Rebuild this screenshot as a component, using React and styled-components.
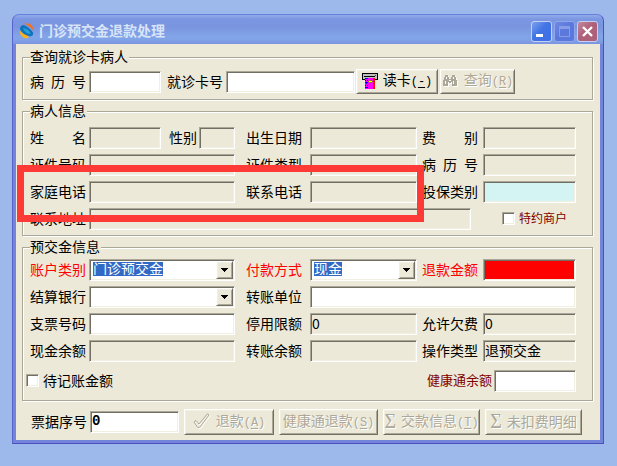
import { useId } from "react";
import styled, { createGlobalStyle, css } from "styled-components";

const GlobalStyle = createGlobalStyle`
  *,
  *::before,
  *::after {
    box-sizing: border-box;
  }

  body {
    margin: 0;
    background: #9db9eb;
    color: #000;
    font-family: "Noto Sans CJK SC", sans-serif;
    font-size: 14px;
    line-height: 14px;
  }

  button,
  input,
  select {
    margin: 0;
    border-radius: 0;
    font: inherit;
    color: inherit;
  }
`;

const sunken = css`
  border: 1px solid;
  border-color: #aca899 #fff #fff #aca899;
  box-shadow: inset 1px 1px 0 #716f64, inset -1px -1px 0 #f1efe2;
`;

const raised = css`
  border: 1px solid;
  border-color: #fff #716f64 #716f64 #fff;
  box-shadow: inset 1px 1px 0 #f1efe2, inset -1px -1px 0 #aca899;
`;

const Desktop = styled.div`
  padding: 14px 13px 22px 12px;
`;

const Window = styled.main`
  border: 1px solid #5a63cb;
  border-top-color: #6681dd;
  border-right-color: #4f4fbd;
  border-bottom-color: #4f4fbd;
  border-radius: 7px 7px 0 0;
  background: #7385da;
  padding: 0 3px 3px;
  overflow: hidden;
`;

const TitleBar = styled.header`
  display: flex;
  align-items: center;
  gap: 4px;
  height: 29px;
  margin: 0 -3px;
  padding: 3px 5px 0 6px;
  background: linear-gradient(
    #91abeb 0,
    #7c97e1 4px,
    #7a95df 12px,
    #82a5e9 22px,
    #80a2e7 25px,
    #7b93df 29px
  );
`;

const Title = styled.h1`
  flex: 1;
  margin: 0;
  padding-bottom: 2px;
  font-size: 14px;
  line-height: 14px;
  font-weight: 700;
  color: #d8e4f8;
`;

const WindowButtons = styled.div`
  display: flex;
  gap: 2px;
`;

const backgrounds = {
  min: "linear-gradient(135deg, #7da0f0, #4374e4 45%, #3d6fe6)",
  max: "linear-gradient(135deg, #6f8ae3, #5b78dc 45%, #5977dd)",
  close: "linear-gradient(135deg, #c08a9d, #b0607a 45%, #ab6278)",
};

const WindowButton = styled.button`
  display: grid;
  place-items: center;
  width: 21px;
  height: 21px;
  padding: 0;
  border: 1px solid ${(props) => (props.$kind === "max" ? "#8fa6ea" : "#c3d0f4")};
  border-radius: 3px;
  background: ${(props) => backgrounds[props.$kind]};
`;

const Content = styled.form`
  display: flex;
  flex-direction: column;
  gap: 4px;
  padding: 6px 7px 5px 6px;
  background: #ece9d8;
`;

const Group = styled.fieldset`
  min-width: 0;
  margin: 0;
  padding: ${(props) => props.$padding};
  border: 1px solid #aca899;
  box-shadow: 1px 1px 0 #fff, inset 1px 1px 0 #fff;
`;

const Legend = styled.legend`
  height: 14px;
  padding: 0 1px 0 0;
  background: #ece9d8;
  line-height: 12px;
`;

const FormGrid = styled.div`
  position: relative;
  display: grid;
  grid-template-columns:
    59px minmax(0, 146fr) 75px minmax(0, 107fr)
    66px minmax(0, 93fr);
  grid-auto-rows: 22px;
  row-gap: 5px;
  align-items: center;

  & + & {
    margin-top: 5px;
  }
`;

const labelColors = {
  required: "#ff0000",
  note: "#800000",
};

const Label = styled.label`
  padding-bottom: 2px;
  color: ${(props) => labelColors[props.$tone] || "#000"};
  font-size: ${(props) => (props.$tone === "note" ? "13px" : "14px")};
  white-space: nowrap;

  ${FormGrid} > &:nth-of-type(3n + 2) {
    padding-left: 11px;
  }

  ${FormGrid} > &:nth-of-type(3n) {
    padding-left: 5px;
  }
`;

const fills = {
  readonly: "#ece9d8",
  cyan: "#d3f4f2",
  red: "#ff0000",
};

const Input = styled.input`
  ${sunken}
  width: ${(props) => props.$width || "100%"};
  min-width: 0;
  height: 22px;
  padding: 0 1px 3px;
  background: ${(props) => fills[props.$fill] || "#fff"};
  font-weight: ${(props) => (props.$bold ? 700 : 400)};
  font-family: ${(props) =>
    props.$bold
      ? `"Liberation Mono", monospace`
      : `"Noto Sans CJK SC", sans-serif`};
  grid-column: ${(props) => props.$column || "auto"};
`;

const NameCell = styled.div`
  display: grid;
  grid-template-columns: minmax(0, 72fr) 38px minmax(0, 36fr);
  align-items: center;

  ${Label} {
    padding-left: 8px;
  }
`;

const AddressCell = styled.div`
  grid-column: 2 / 6;
  padding-right: 12px;
`;

const ComboBox = styled.div`
  ${sunken}
  position: relative;
  height: 22px;
  padding: 2px 2px 2px 3px;
  background: #fff;
`;

const Select = styled.select`
  appearance: none;
  display: block;
  width: 100%;
  height: 14px;
  padding: 0 0 1px;
  border: 0;
  outline: 0;
  color: #fff;
  line-height: 13px;
  background: linear-gradient(#316ac5, #316ac5) no-repeat;
  background-size: ${(props) => props.$chars * 14}px 14px;
`;

const DropArrow = styled.span`
  ${raised}
  position: absolute;
  top: 1px;
  right: 1px;
  display: grid;
  place-items: center;
  width: 17px;
  height: 18px;
  background: #ece9d8;
  pointer-events: none;
`;

const Row = styled.div`
  display: flex;
  align-items: center;
`;

const SearchRow = styled(Row)`
  height: 25px;
  gap: 3px;

  ${Label} + ${Input} + ${Label} {
    margin-left: 3px;
  }
`;

const SearchButtons = styled.div`
  display: flex;
  gap: 2px;
  margin-left: -2px;
`;

const BalanceRow = styled(Row)`
  justify-content: space-between;
  margin: 8px 0 0 -4px;
`;

const Balance = styled(Row)`
  gap: 2px;
`;

const CheckLabel = styled(Label)`
  display: flex;
  align-items: center;
  gap: 4px;
  font-size: ${(props) => (props.$tone === "note" ? "12px" : "14px")};

  ${FormGrid} > && {
    padding-left: 19px;
  }
`;

const Checkbox = styled.input`
  ${sunken}
  appearance: none;
  flex: none;
  width: 13px;
  height: 13px;
  background: #fff;
`;

const ActionRow = styled(Row)`
  gap: 5px;
  margin-top: 4px;
  padding: 0 11px 0 9px;

  ${Label} {
    margin-right: -2px;
  }
`;

const Button = styled.button`
  ${raised}
  display: flex;
  flex: 0 1 ${(props) => props.$width};
  width: ${(props) => props.$width};
  align-items: center;
  justify-content: center;
  gap: 5px;
  height: ${(props) => (props.$tall ? "26px" : "25px")};
  padding: 0 2px 2px;
  background: #ece9d8;
  white-space: nowrap;
  overflow: hidden;

  &:disabled {
    color: #aca899;
    text-shadow: 1px 1px 0 #fff;
  }

  svg {
    flex: none;
  }
`;

const Hotkey = styled.span`
  font-family: "Liberation Mono", monospace;
  font-size: 12px;

  u {
    text-decoration-thickness: 1px;
    text-underline-offset: 2px;
  }
`;

const Sigma = styled.span`
  font-family: "Liberation Serif", serif;
  font-size: 20px;
`;

// Covers the phone row, reaching into the rows above and below
const Highlight = styled.div`
  position: absolute;
  grid-column: 1 / 5;
  grid-row: 3 / 4;
  inset: -16px -7px -19px -13px;
  border: 7px solid #fd3a36;
  pointer-events: none;
`;

function LogoIcon() {
  return (
    <svg width="16" height="16" viewBox="0 0 16 16" aria-hidden="true">
      <path d="M5 0.500 H10 Q14 2 15 8 L11.500 4.500 Q9 2 5 0.500Z" fill="#f4701c" />
      <path d="M0.500 7 Q3 11 9 12.500 L9.500 15 Q5 16 2 12.500 Q0.500 10 0.500 7Z" fill="#fbb01c" />
      <path d="M1.500 3.500 L4 2 Q9 3 14 9.500 V12 L11.500 13.500 Q4 12 1 6.500Z" fill="#1272b8" />
      <path d="M4 5 Q9 5 12 11 Q6 11 4 5Z" fill="#24a0dc" />
    </svg>
  );
}

function CardIcon() {
  return (
    <svg
      width="16"
      height="16"
      viewBox="0 0 16 16"
      shapeRendering="crispEdges"
      aria-hidden="true"
    >
      <path d="M0 0h16v7h-3V6H3v1H0z" fill="#000" />
      <path d="M1 1h14v5H1z" fill="#c0c0c0" />
      <path d="M2 3h11v1H2z" fill="#000" />
      <path d="M13 2h1v1h-1z" fill="#f00" />
      <path d="M3 5h10v11H3z" fill="#f0f" />
      <path d="M11 5h2v11h-2z" fill="#f00" />
      <path
        d="M3 5h3v1H3zM3 7h1v1H3zM5 7h1v1H5zM3 9h3v1H3zM4 10h1v1H4zM3 12h1v1H3zM5 12h1v1H5zM3 14h3v1H3z"
        fill="#00f"
      />
      <path d="M7 7h3v1H7zM6 8h1v1H6zM10 8h1v1h-1zM7 9h3v1H7z" fill="#808000" />
      <path d="M7 8h3v1H7z" fill="#ff0" />
    </svg>
  );
}

function BinocularsIcon() {
  const shape =
    "M3 1h3v2h1v2h2V3h1V1h3v2h1v3h1v6h-5V8H9v1H7V8H6v4H1V6h1V3h1z";

  return (
    <svg
      width="17"
      height="14"
      viewBox="0 0 17 14"
      shapeRendering="crispEdges"
      aria-hidden="true"
    >
      <path d={shape} fill="#fff" transform="translate(1 1)" />
      <path d={shape} fill="#aca899" />
      <path
        d="M4 3h1v2H4zM11 3h1v2h-1zM3 7h1v3H3zM11 7h1v3h-1zM7 6h2v1H7z"
        fill="#fff"
      />
    </svg>
  );
}

function CheckIcon() {
  const shape = "M1 9 L3 7.5 L6 11 L14.5 0.8 L16 2 L6.5 14.5 L4.8 14.5 Z";

  return (
    <svg width="18" height="17" viewBox="0 0 18 17" fill="none" aria-hidden="true">
      <path d={shape} stroke="#fff" transform="translate(1 1)" />
      <path d={shape} stroke="#aca899" />
    </svg>
  );
}

function Field({ label, tone, ...inputProps }) {
  const id = useId();

  return (
    <>
      <Label htmlFor={id} $tone={tone}>
        {label}
      </Label>
      <Input id={id} type="text" {...inputProps} />
    </>
  );
}

function ReadOnlyField(props) {
  return <Field readOnly $fill="readonly" {...props} />;
}

function ComboField({ label, tone, value = "" }) {
  const id = useId();

  return (
    <>
      <Label htmlFor={id} $tone={tone}>
        {label}
      </Label>
      <ComboBox>
        <Select id={id} $chars={value.length}>
          <option>{value}</option>
        </Select>
        <DropArrow>
          <svg width="7" height="4" shapeRendering="crispEdges">
            <path d="M0 0h7v1H0zM1 1h5v1H1zM2 2h3v1H2zM3 3h1v1H3z" />
          </svg>
        </DropArrow>
      </ComboBox>
    </>
  );
}

function AddressField() {
  const id = useId();

  return (
    <>
      <Label htmlFor={id}>联系地址</Label>
      <AddressCell>
        <Input id={id} type="text" readOnly $fill="readonly" />
      </AddressCell>
    </>
  );
}

function NameField() {
  const id = useId();

  return (
    <>
      <Label htmlFor={id}>姓　　名</Label>
      <NameCell>
        <Input id={id} type="text" readOnly $fill="readonly" />
        <ReadOnlyField label="性别" />
      </NameCell>
    </>
  );
}

function Key({ children }) {
  return (
    <Hotkey>
      (<u>{children}</u>)
    </Hotkey>
  );
}

function App() {
  return (
    <>
      <GlobalStyle />
      <Desktop>
        <Window>
          <TitleBar>
            <LogoIcon />
            <Title>门诊预交金退款处理</Title>
            <WindowButtons>
              <WindowButton $kind="min" aria-label="最小化">
                <svg width="19" height="19">
                  <path d="M4 12h7v3H4z" fill="#fff" />
                </svg>
              </WindowButton>
              <WindowButton $kind="max" aria-label="最大化" disabled>
                <svg width="19" height="19" fill="none">
                  <path d="M4.500 5v9.500h10V5" stroke="#879de8" />
                  <path d="M4 5.500h11" stroke="#879de8" strokeWidth="3" />
                </svg>
              </WindowButton>
              <WindowButton $kind="close" aria-label="关闭">
                <svg width="19" height="19" fill="none">
                  <path d="M5 5l9 9M14 5l-9 9" stroke="#fff" strokeWidth="2.400" />
                </svg>
              </WindowButton>
            </WindowButtons>
          </TitleBar>

          <Content>
            <Group $padding="5px 16px 5px 7px">
              <Legend>查询就诊卡病人</Legend>
              <SearchRow>
                <Field label="病&#8194;历&#8194;号" $width="72px" />
                <Field label="就诊卡号" $width="129px" />
                <SearchButtons>
                  <Button type="button" $width="82px">
                    <CardIcon />
                    <span>
                      读卡<Key>-</Key>
                    </span>
                  </Button>
                  <Button type="button" $width="75px" disabled>
                    <BinocularsIcon />
                    <span>
                      查询<Key>R</Key>
                    </span>
                  </Button>
                </SearchButtons>
              </SearchRow>
            </Group>

            <Group $padding="9px 16px 5px 7px">
              <Legend>病人信息</Legend>
              <FormGrid>
                <NameField />
                <ReadOnlyField label="出生日期" />
                <ReadOnlyField label="费　　别" />

                <ReadOnlyField label="证件号码" />
                <ReadOnlyField label="证件类型" />
                <ReadOnlyField label="病&#8194;历&#8194;号" />

                <ReadOnlyField label="家庭电话" />
                <ReadOnlyField label="联系电话" />
                <Field label="投保类别" $fill="cyan" />

                <AddressField />
                <CheckLabel $tone="note">
                  <Checkbox type="checkbox" />
                  特约商户
                </CheckLabel>
                <Highlight />
              </FormGrid>
            </Group>

            <Group $padding="5px 16px 8px 7px">
              <Legend>预交金信息</Legend>
              <FormGrid>
                <ComboField label="账户类别" tone="required" value="门诊预交金" />
                <ComboField label="付款方式" tone="required" value="现金" />
                <Field label="退款金额" tone="required" $fill="red" />

                <ComboField label="结算银行" />
                <Field label="转账单位" $column="4 / 7" />
              </FormGrid>
              <FormGrid>
                <Field label="支票号码" />
                <ReadOnlyField label="停用限额" defaultValue="0" />
                <ReadOnlyField label="允许欠费" defaultValue="0" />

                <ReadOnlyField label="现金余额" />
                <ReadOnlyField label="转账余额" />
                <ReadOnlyField label="操作类型" defaultValue="退预交金" />
              </FormGrid>
              <BalanceRow>
                <CheckLabel>
                  <Checkbox type="checkbox" />
                  待记账金额
                </CheckLabel>
                <Balance>
                  <Field label="健康通余额" tone="note" $width="82px" />
                </Balance>
              </BalanceRow>
            </Group>

            <ActionRow>
              <Field label="票据序号" defaultValue="0" $width="89px" $bold />
              <Button type="button" $width="90px" $tall disabled>
                <CheckIcon />
                <span>
                  退款<Key>A</Key>
                </span>
              </Button>
              <Button type="button" $width="99px" $tall disabled>
                <span>
                  健康通退款<Key>S</Key>
                </span>
              </Button>
              <Button type="button" $width="97px" $tall disabled>
                <Sigma>Σ</Sigma>
                <span>
                  交款信息<Key>T</Key>
                </span>
              </Button>
              <Button type="button" $width="97px" $tall disabled>
                <Sigma>Σ</Sigma>
                <span>未扣费明细</span>
              </Button>
            </ActionRow>
          </Content>
        </Window>
      </Desktop>
    </>
  );
}

export default App;
